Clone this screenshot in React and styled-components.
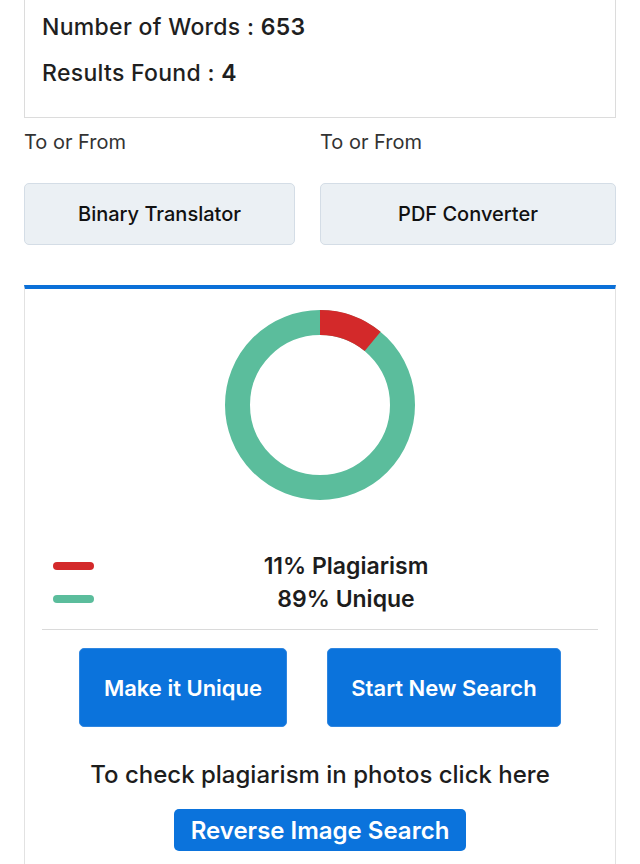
import React from "react";
import styled, { createGlobalStyle } from "styled-components";

const GlobalStyle = createGlobalStyle`
  body {
    margin: 0;
    background: #ffffff;
    font-family: "Inter", "Open Sans", sans-serif;
    color: #1f1f1f;
  }
`;

const Page = styled.div`
  width: 592px;
  padding: 0 24px;
  overflow: hidden;
  height: 864px;
`;

const StatsCard = styled.div`
  border: 1px solid #dcdcdc;
  border-top: none;
  padding: 10px 17px 27px;
  display: flex;
  flex-direction: column;
  gap: 12px;
`;

const Stat = styled.div`
  font-size: 23px;
  font-weight: 500;
  line-height: 34px;
  letter-spacing: 0.3px;

  b {
    font-weight: 600;
  }
`;

const ToolsGrid = styled.div`
  display: grid;
  grid-template-columns: 271px 296px;
  column-gap: 25px;
  margin-top: 10px;
`;

const ToolColumn = styled.div`
  display: flex;
  flex-direction: column;
  gap: 27px;
`;

const ToolLabel = styled.div`
  font-size: 20px;
  line-height: 28px;
  color: #333;
`;

const ToolButton = styled.button`
  height: 62px;
  background: #ebf0f4;
  border: 1px solid #d4dde6;
  border-radius: 5px;
  font-family: inherit;
  font-size: 20px;
  font-weight: 500;
  color: #111;
`;

const ResultCard = styled.div`
  margin-top: 40px;
  border: 1px solid #e2e2e2;
  border-top: 4px solid #0b70d8;
  padding: 21px 17px 40px;
  display: flex;
  flex-direction: column;
  align-items: center;
`;

const Donut = styled.svg`
  display: block;
`;

const Legend = styled.div`
  align-self: stretch;
  display: flex;
  margin-top: 50px;
  padding: 0 0 13px 11px;
  border-bottom: 1px solid #dadada;
`;

const Swatches = styled.div`
  display: flex;
  flex-direction: column;
  gap: 25px;
  padding-top: 12px;
`;

const Swatch = styled.span`
  display: block;
  width: 41px;
  height: 8px;
  border-radius: 4px;
  background: ${({ color }) => color};
`;

const LegendText = styled.div`
  flex: 1;
  text-align: center;
  font-size: 23px;
  font-weight: 600;
  line-height: 33px;
  color: #1d1d1d;
`;

const ActionRow = styled.div`
  display: flex;
  gap: 40px;
  justify-content: center;
  margin-top: 18px;
`;

const PrimaryButton = styled.button`
  height: 79px;
  width: ${({ w }) => w}px;
  background: #0b73dc;
  border: 1px solid #2f86e0;
  border-radius: 5px;
  color: #fff;
  font-family: inherit;
  font-size: 22px;
  font-weight: 600;
`;

const PhotoNote = styled.div`
  margin-top: 32px;
  font-size: 24px;
  font-weight: 500;
  line-height: 32px;
  color: #1d1d1d;
`;

const ReverseButton = styled.button`
  margin-top: 18px;
  height: 42px;
  width: 292px;
  background: #0b73dc;
  border: none;
  border-radius: 5px;
  color: #fff;
  font-family: inherit;
  font-size: 24px;
  font-weight: 600;
`;

const PlagiarismDonut = ({ plag }) => {
  const r = 82.5;
  const c = 2 * Math.PI * r;
  const red = (plag / 100) * c;
  return (
    <Donut width="190" height="190" viewBox="0 0 190 190">
      <circle cx="95" cy="95" r={r} fill="none" stroke="#5bbd9c" strokeWidth="25" />
      <circle
        cx="95"
        cy="95"
        r={r}
        fill="none"
        stroke="#d3292a"
        strokeWidth="25"
        strokeDasharray={`${red} ${c - red}`}
        transform="rotate(-90 95 95)"
      />
    </Donut>
  );
};

export default function App() {
  return (
    <>
      <GlobalStyle />
      <Page>
        <StatsCard>
          <Stat>Number of Words : <b>653</b></Stat>
          <Stat>Results Found : <b>4</b></Stat>
        </StatsCard>

        <ToolsGrid>
          <ToolColumn>
            <ToolLabel>To or From</ToolLabel>
            <ToolButton>Binary Translator</ToolButton>
          </ToolColumn>
          <ToolColumn>
            <ToolLabel>To or From</ToolLabel>
            <ToolButton>PDF Converter</ToolButton>
          </ToolColumn>
        </ToolsGrid>

        <ResultCard>
          <PlagiarismDonut plag={11} />
          <Legend>
            <Swatches>
              <Swatch color="#d3292a" />
              <Swatch color="#5bbd9c" />
            </Swatches>
            <LegendText>
              <div>11% Plagiarism</div>
              <div>89% Unique</div>
            </LegendText>
          </Legend>
          <ActionRow>
            <PrimaryButton w={208}>Make it Unique</PrimaryButton>
            <PrimaryButton w={234}>Start New Search</PrimaryButton>
          </ActionRow>
          <PhotoNote>To check plagiarism in photos click here</PhotoNote>
          <ReverseButton>Reverse Image Search</ReverseButton>
        </ResultCard>
      </Page>
    </>
  );
}
